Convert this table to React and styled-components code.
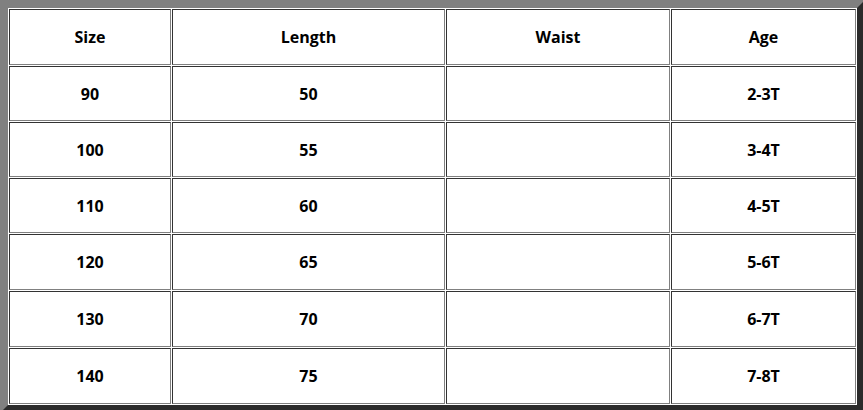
import React from "react";
import styled, { createGlobalStyle } from "styled-components";

const rows = [
  ["90", "50", "", "2-3T"],
  ["100", "55", "", "3-4T"],
  ["110", "60", "", "4-5T"],
  ["120", "65", "", "5-6T"],
  ["130", "70", "", "6-7T"],
  ["140", "75", "", "7-8T"]
];

const heights = [55, 55, 55, 56, 56, 56];

const App = () => {
  return (
    <>
      <GlobalStyle />
      <SizeTable>
        <colgroup>
          <Col width={162} />
          <Col width={273} />
          <Col width={224} />
          <Col width={185} />
        </colgroup>
        <thead>
          <tr>
            <Cell as="th" h={56}>Size</Cell>
            <Cell as="th" h={56}>Length</Cell>
            <Cell as="th" h={56}>Waist</Cell>
            <Cell as="th" h={56}>Age</Cell>
          </tr>
        </thead>
        <tbody>
          {rows.map((row, i) => (
            <tr key={row[0]}>
              {row.map((value, j) => (
                <Cell key={j} h={heights[i]}>{value}</Cell>
              ))}
            </tr>
          ))}
        </tbody>
      </SizeTable>
    </>
  );
};
export default App;

/*************Styles************/
const GlobalStyle = createGlobalStyle`
  html, body {
    margin: 0;
    padding: 0;
    background: #fff;
    overflow: hidden;
  }
  body {
    font-family: "Open Sans", "Liberation Sans", sans-serif;
  }
`;

const SizeTable = styled.table`
  width: 865px;
  table-layout: fixed;
  border-collapse: separate;
  border-spacing: 1px;
  border-width: 8px;
  border-style: solid;
  border-color: #808080 #2b2b2b #2b2b2b #808080;
  background: #fff;
`;

const Col = styled.col`
  width: ${props => props.width}px;
`;

const Cell = styled.td`
  box-sizing: border-box;
  height: ${props => props.h}px;
  padding: 0;
  border-width: 1px;
  border-style: solid;
  border-color: #333 #808080 #808080 #333;
  text-align: center;
  vertical-align: middle;
  font-size: 16px;
  font-weight: 700;
  color: #000;
  line-height: 20px;
`;
